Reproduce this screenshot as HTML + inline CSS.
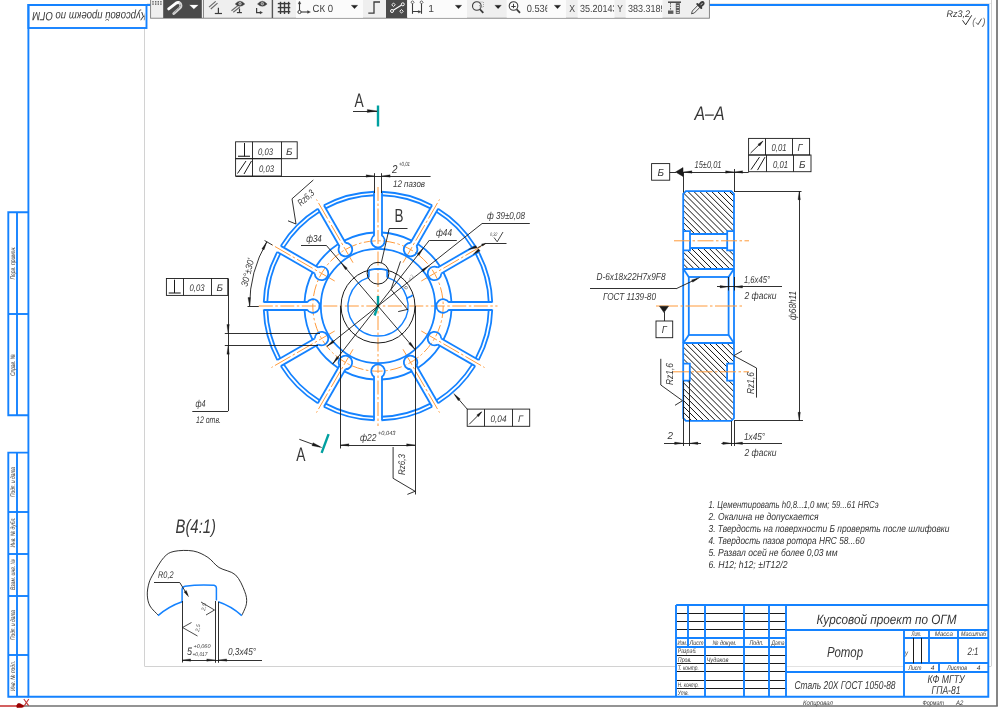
<!DOCTYPE html>
<html><head><meta charset="utf-8"><title>Ротор</title>
<style>
html,body{margin:0;padding:0;background:#fff;overflow:hidden}
body{width:1000px;height:708px;position:relative;font-family:"Liberation Sans",sans-serif}
svg{position:absolute;left:0;top:0;display:block;will-change:transform}
svg text{font-family:"Liberation Sans",sans-serif;text-rendering:geometricPrecision}
</style></head><body>
<svg width="1000" height="708" viewBox="0 0 1000 708">
<line x1="147.00" y1="3.50" x2="991.30" y2="3.50" stroke="#e6e6e6" stroke-width="1" />
<line x1="786.40" y1="666.50" x2="904.00" y2="666.50" stroke="#e2e2e2" stroke-width="1" />
<line x1="144.50" y1="28.50" x2="144.50" y2="666.40" stroke="#d2d2d2" stroke-width="1" />
<line x1="144.60" y1="666.50" x2="676.00" y2="666.50" stroke="#d2d2d2" stroke-width="1" />
<line x1="991.50" y1="0.00" x2="991.50" y2="666.00" stroke="#d2d2d2" stroke-width="1" />
<line x1="989.00" y1="666.50" x2="991.30" y2="666.50" stroke="#d2d2d2" stroke-width="1" />
<line x1="997.00" y1="0.00" x2="997.00" y2="706.00" stroke="#707070" stroke-width="1.7" />
<line x1="24.00" y1="706.00" x2="997.80" y2="706.00" stroke="#707070" stroke-width="1.7" />
<path d="M28.40,4.95 L988.30,4.95 L988.30,696.75 L28.40,696.75 Z" stroke="#1482ff" stroke-width="1.9" fill="none" />
<rect x="28.40" y="4.95" width="118.10" height="23.05" stroke="#1482ff" stroke-width="1.9" fill="none"/>
<clipPath id="tc"><rect x="29" y="5" width="115.6" height="23"/></clipPath><g clip-path="url(#tc)">
<text x="146.30" y="12.20" font-size="12" text-anchor="start" font-style="italic" fill="#383838" transform="rotate(180 146.30 12.20)" textLength="114.0" lengthAdjust="spacingAndGlyphs" >Курсовой проект по ОГМ</text>
</g>
<path d="M28.50,212.20 L8.30,212.20 L8.30,415.20 L28.50,415.20" stroke="#1482ff" stroke-width="1.9" fill="none" />
<line x1="17.00" y1="212.20" x2="17.00" y2="415.20" stroke="#1482ff" stroke-width="1.9" />
<line x1="8.30" y1="314.00" x2="28.50" y2="314.00" stroke="#1482ff" stroke-width="1.9" />
<path d="M28.50,452.60 L8.30,452.60 L8.30,696.80 L28.50,696.80" stroke="#1482ff" stroke-width="1.9" fill="none" />
<line x1="17.00" y1="452.60" x2="17.00" y2="696.80" stroke="#1482ff" stroke-width="1.9" />
<line x1="8.30" y1="512.00" x2="28.50" y2="512.00" stroke="#1482ff" stroke-width="1.9" />
<line x1="8.30" y1="554.00" x2="28.50" y2="554.00" stroke="#1482ff" stroke-width="1.9" />
<line x1="8.30" y1="596.00" x2="28.50" y2="596.00" stroke="#1482ff" stroke-width="1.9" />
<line x1="8.30" y1="655.00" x2="28.50" y2="655.00" stroke="#1482ff" stroke-width="1.9" />
<text x="15.00" y="263.00" font-size="6.6" text-anchor="middle" font-style="italic" fill="#383838" transform="rotate(-90 15.00 263.00)" textLength="33.0" lengthAdjust="spacingAndGlyphs" >Перв. примен.</text>
<text x="15.00" y="365.00" font-size="6.6" text-anchor="middle" font-style="italic" fill="#383838" transform="rotate(-90 15.00 365.00)" textLength="22.0" lengthAdjust="spacingAndGlyphs" >Справ. №</text>
<text x="15.00" y="482.00" font-size="6.6" text-anchor="middle" font-style="italic" fill="#383838" transform="rotate(-90 15.00 482.00)" textLength="30.0" lengthAdjust="spacingAndGlyphs" >Подп. и дата</text>
<text x="15.00" y="532.50" font-size="6.6" text-anchor="middle" font-style="italic" fill="#383838" transform="rotate(-90 15.00 532.50)" textLength="30.0" lengthAdjust="spacingAndGlyphs" >Инв. № дубл.</text>
<text x="15.00" y="574.50" font-size="6.6" text-anchor="middle" font-style="italic" fill="#383838" transform="rotate(-90 15.00 574.50)" textLength="31.0" lengthAdjust="spacingAndGlyphs" >Взам. инв. №</text>
<text x="15.00" y="625.00" font-size="6.6" text-anchor="middle" font-style="italic" fill="#383838" transform="rotate(-90 15.00 625.00)" textLength="30.0" lengthAdjust="spacingAndGlyphs" >Подп. и дата</text>
<text x="15.00" y="676.00" font-size="6.6" text-anchor="middle" font-style="italic" fill="#383838" transform="rotate(-90 15.00 676.00)" textLength="30.0" lengthAdjust="spacingAndGlyphs" >Инв. № подл.</text>
<line x1="0.00" y1="706.00" x2="17.00" y2="706.00" stroke="#c44" stroke-width="1.7" />
<path d="M16.5,705.8 Q17.5,702.6 20,703.6 Q22.5,705.2 24,705.6 L24,706.6 L22,707.5 L17,707.8 Z" stroke="#900" stroke-width="0.4" fill="#9a0000" />
<line x1="23.80" y1="699.00" x2="28.60" y2="705.60" stroke="#c03030" stroke-width="1.1" />
<line x1="28.80" y1="699.00" x2="24.40" y2="705.60" stroke="#c03030" stroke-width="1.1" />
<line x1="676.40" y1="613.50" x2="786.40" y2="613.50" stroke="#1a1a1a" stroke-width="1.0" />
<line x1="676.40" y1="621.50" x2="786.40" y2="621.50" stroke="#1a1a1a" stroke-width="1.0" />
<line x1="676.40" y1="629.50" x2="786.40" y2="629.50" stroke="#1a1a1a" stroke-width="1.0" />
<line x1="676.40" y1="655.50" x2="786.40" y2="655.50" stroke="#1a1a1a" stroke-width="1.0" />
<line x1="676.40" y1="663.50" x2="786.40" y2="663.50" stroke="#1a1a1a" stroke-width="1.0" />
<line x1="676.40" y1="671.50" x2="786.40" y2="671.50" stroke="#1a1a1a" stroke-width="1.0" />
<line x1="676.40" y1="680.50" x2="786.40" y2="680.50" stroke="#1a1a1a" stroke-width="1.0" />
<line x1="676.40" y1="688.50" x2="786.40" y2="688.50" stroke="#1a1a1a" stroke-width="1.0" />
<line x1="676.40" y1="605.00" x2="786.40" y2="605.00" stroke="#1482ff" stroke-width="1.9" />
<line x1="676.40" y1="638.00" x2="786.40" y2="638.00" stroke="#1482ff" stroke-width="1.9" />
<line x1="676.40" y1="647.00" x2="786.40" y2="647.00" stroke="#1482ff" stroke-width="1.9" />
<line x1="676.40" y1="605.00" x2="988.30" y2="605.00" stroke="#1482ff" stroke-width="1.9" />
<line x1="676.00" y1="604.90" x2="676.00" y2="696.75" stroke="#1482ff" stroke-width="1.9" />
<line x1="688.00" y1="604.90" x2="688.00" y2="646.65" stroke="#1482ff" stroke-width="1.9" />
<line x1="705.00" y1="604.90" x2="705.00" y2="696.75" stroke="#1482ff" stroke-width="1.9" />
<line x1="744.00" y1="604.90" x2="744.00" y2="696.75" stroke="#1482ff" stroke-width="1.9" />
<line x1="769.00" y1="604.90" x2="769.00" y2="696.75" stroke="#1482ff" stroke-width="1.9" />
<line x1="786.00" y1="604.90" x2="786.00" y2="696.75" stroke="#1482ff" stroke-width="1.9" />
<line x1="786.40" y1="630.00" x2="988.30" y2="630.00" stroke="#1482ff" stroke-width="1.9" />
<line x1="786.40" y1="672.00" x2="988.30" y2="672.00" stroke="#1482ff" stroke-width="1.9" />
<line x1="904.00" y1="630.00" x2="904.00" y2="696.80" stroke="#1482ff" stroke-width="1.9" />
<line x1="904.30" y1="638.00" x2="988.30" y2="638.00" stroke="#1482ff" stroke-width="1.9" />
<line x1="904.30" y1="663.00" x2="988.30" y2="663.00" stroke="#1482ff" stroke-width="1.9" />
<line x1="929.00" y1="630.00" x2="929.00" y2="663.40" stroke="#1482ff" stroke-width="1.9" />
<line x1="958.00" y1="630.00" x2="958.00" y2="663.40" stroke="#1482ff" stroke-width="1.9" />
<line x1="939.00" y1="663.40" x2="939.00" y2="672.20" stroke="#1482ff" stroke-width="1.9" />
<line x1="913.50" y1="637.90" x2="913.50" y2="663.40" stroke="#1a1a1a" stroke-width="1.0" />
<line x1="921.50" y1="637.90" x2="921.50" y2="663.40" stroke="#1a1a1a" stroke-width="1.0" />
<text x="886.50" y="623.50" font-size="13.5" text-anchor="middle" font-style="italic" fill="#383838" textLength="140.0" lengthAdjust="spacingAndGlyphs" >Курсовой проект по ОГМ</text>
<text x="845.00" y="657.00" font-size="14.5" text-anchor="middle" font-style="italic" fill="#383838" textLength="36.0" lengthAdjust="spacingAndGlyphs" >Ротор</text>
<text x="845.00" y="689.00" font-size="11.4" text-anchor="middle" font-style="italic" fill="#383838" textLength="101.0" lengthAdjust="spacingAndGlyphs" >Сталь 20Х ГОСТ 1050-88</text>
<text x="946.00" y="682.50" font-size="11.4" text-anchor="middle" font-style="italic" fill="#383838" textLength="37.0" lengthAdjust="spacingAndGlyphs" >КФ МГТУ</text>
<text x="946.00" y="694.00" font-size="11.4" text-anchor="middle" font-style="italic" fill="#383838" textLength="29.0" lengthAdjust="spacingAndGlyphs" >ГПА-81</text>
<text x="916.50" y="636.30" font-size="6.6" text-anchor="middle" font-style="italic" fill="#383838" textLength="10.0" lengthAdjust="spacingAndGlyphs" >Лит.</text>
<text x="943.80" y="636.30" font-size="6.6" text-anchor="middle" font-style="italic" fill="#383838" textLength="18.0" lengthAdjust="spacingAndGlyphs" >Масса</text>
<text x="973.50" y="636.30" font-size="6.6" text-anchor="middle" font-style="italic" fill="#383838" textLength="25.0" lengthAdjust="spacingAndGlyphs" >Масштаб</text>
<text x="973.00" y="655.00" font-size="10.8" text-anchor="middle" font-style="italic" fill="#383838" textLength="11.0" lengthAdjust="spacingAndGlyphs" >2:1</text>
<text x="905.00" y="655.00" font-size="6.6" text-anchor="start" font-style="italic" fill="#383838" textLength="3.0" lengthAdjust="spacingAndGlyphs" >у</text>
<text x="915.00" y="670.10" font-size="6.6" text-anchor="middle" font-style="italic" fill="#383838" textLength="13.0" lengthAdjust="spacingAndGlyphs" >Лист</text>
<text x="932.50" y="670.10" font-size="6.6" text-anchor="middle" font-style="italic" fill="#383838" >4</text>
<text x="957.00" y="670.10" font-size="6.6" text-anchor="middle" font-style="italic" fill="#383838" textLength="20.0" lengthAdjust="spacingAndGlyphs" >Листов</text>
<text x="978.50" y="670.10" font-size="6.6" text-anchor="middle" font-style="italic" fill="#383838" >4</text>
<text x="677.50" y="645.00" font-size="6.6" text-anchor="start" font-style="italic" fill="#383838" textLength="9.5" lengthAdjust="spacingAndGlyphs" >Изм.</text>
<text x="689.50" y="645.00" font-size="6.6" text-anchor="start" font-style="italic" fill="#383838" textLength="14.0" lengthAdjust="spacingAndGlyphs" >Лист</text>
<text x="724.50" y="645.00" font-size="6.6" text-anchor="middle" font-style="italic" fill="#383838" textLength="24.0" lengthAdjust="spacingAndGlyphs" >№ докум.</text>
<text x="756.50" y="645.00" font-size="6.6" text-anchor="middle" font-style="italic" fill="#383838" textLength="14.0" lengthAdjust="spacingAndGlyphs" >Подп.</text>
<text x="778.00" y="645.00" font-size="6.6" text-anchor="middle" font-style="italic" fill="#383838" textLength="13.0" lengthAdjust="spacingAndGlyphs" >Дата</text>
<text x="677.80" y="653.30" font-size="6.6" text-anchor="start" font-style="italic" fill="#383838" textLength="19.0" lengthAdjust="spacingAndGlyphs" >Разраб.</text>
<text x="677.80" y="661.70" font-size="6.6" text-anchor="start" font-style="italic" fill="#383838" textLength="14.0" lengthAdjust="spacingAndGlyphs" >Пров.</text>
<text x="706.50" y="661.70" font-size="6.6" text-anchor="start" font-style="italic" fill="#383838" textLength="22.0" lengthAdjust="spacingAndGlyphs" >Чудаков</text>
<text x="677.80" y="670.00" font-size="6.6" text-anchor="start" font-style="italic" fill="#383838" textLength="21.0" lengthAdjust="spacingAndGlyphs" >Т. контр.</text>
<text x="677.80" y="686.70" font-size="6.6" text-anchor="start" font-style="italic" fill="#383838" textLength="21.0" lengthAdjust="spacingAndGlyphs" >Н. контр.</text>
<text x="677.80" y="695.00" font-size="6.6" text-anchor="start" font-style="italic" fill="#383838" textLength="11.0" lengthAdjust="spacingAndGlyphs" >Утв.</text>
<text x="803.00" y="704.60" font-size="6.6" text-anchor="start" font-style="italic" fill="#383838" textLength="30.0" lengthAdjust="spacingAndGlyphs" >Копировал</text>
<text x="922.50" y="704.60" font-size="6.6" text-anchor="start" font-style="italic" fill="#383838" textLength="21.5" lengthAdjust="spacingAndGlyphs" >Формат</text>
<text x="956.00" y="704.60" font-size="6.6" text-anchor="start" font-style="italic" fill="#383838" textLength="7.3" lengthAdjust="spacingAndGlyphs" >А2</text>
<text x="708.50" y="508.20" font-size="10.2" text-anchor="start" font-style="italic" fill="#333" textLength="170.0" lengthAdjust="spacingAndGlyphs" >1. Цементировать h0,8...1,0 мм; 59...61 HRCэ</text>
<text x="708.50" y="520.25" font-size="10.2" text-anchor="start" font-style="italic" fill="#333" textLength="110.0" lengthAdjust="spacingAndGlyphs" >2. Окалина не допускается</text>
<text x="708.50" y="532.30" font-size="10.2" text-anchor="start" font-style="italic" fill="#333" textLength="241.0" lengthAdjust="spacingAndGlyphs" >3. Твердость на поверхности Б проверять после шлифовки</text>
<text x="708.50" y="544.35" font-size="10.2" text-anchor="start" font-style="italic" fill="#333" textLength="156.0" lengthAdjust="spacingAndGlyphs" >4. Твердость пазов ротора HRC 58...60</text>
<text x="708.50" y="556.40" font-size="10.2" text-anchor="start" font-style="italic" fill="#333" textLength="129.0" lengthAdjust="spacingAndGlyphs" >5. Развал осей не более 0,03 мм</text>
<text x="708.50" y="568.45" font-size="10.2" text-anchor="start" font-style="italic" fill="#333" textLength="79.0" lengthAdjust="spacingAndGlyphs" >6. H12; h12; ±IT12/2</text>
<text x="946.50" y="17.20" font-size="9.6" text-anchor="start" font-style="italic" fill="#383838" textLength="23.5" lengthAdjust="spacingAndGlyphs" >Rz3,2</text>
<path d="M962.50,20.30 L965.70,24.80 L971.70,15.30" stroke="#1a1a1a" stroke-width="0.9" fill="none" />
<text x="972.20" y="24.50" font-size="10.2" text-anchor="start" font-style="italic" fill="#666" textLength="3.0" lengthAdjust="spacingAndGlyphs" >(</text>
<path d="M976.10,22.50 L978.00,24.60 L981.60,18.60" stroke="#1a1a1a" stroke-width="0.8" fill="none" />
<text x="982.50" y="24.50" font-size="10.2" text-anchor="start" font-style="italic" fill="#666" textLength="3.0" lengthAdjust="spacingAndGlyphs" >)</text>
<line x1="258.80" y1="306.00" x2="497.50" y2="306.00" stroke="#ff9a3a" stroke-width="1.0" stroke-dasharray="14 2.5 2.5 2.5"/>
<line x1="378.00" y1="187.00" x2="378.00" y2="426.00" stroke="#ff9a3a" stroke-width="1.0" stroke-dasharray="14 2.5 2.5 2.5"/>
<circle cx="378.00" cy="306.00" r="65.20" stroke="#ff9a3a" stroke-width="1.0" fill="none" stroke-dasharray="12 2.5 2.5 2.5"/>
<line x1="421.30" y1="281.00" x2="484.52" y2="244.50" stroke="#ff9a3a" stroke-width="1.0" stroke-dasharray="18 2.5 2.5 2.5"/>
<line x1="403.00" y1="262.70" x2="439.50" y2="199.48" stroke="#ff9a3a" stroke-width="1.0" stroke-dasharray="18 2.5 2.5 2.5"/>
<line x1="353.00" y1="262.70" x2="316.50" y2="199.48" stroke="#ff9a3a" stroke-width="1.0" stroke-dasharray="18 2.5 2.5 2.5"/>
<line x1="334.70" y1="281.00" x2="271.48" y2="244.50" stroke="#ff9a3a" stroke-width="1.0" stroke-dasharray="18 2.5 2.5 2.5"/>
<line x1="334.70" y1="331.00" x2="271.48" y2="367.50" stroke="#ff9a3a" stroke-width="1.0" stroke-dasharray="18 2.5 2.5 2.5"/>
<line x1="353.00" y1="349.30" x2="316.50" y2="412.52" stroke="#ff9a3a" stroke-width="1.0" stroke-dasharray="18 2.5 2.5 2.5"/>
<line x1="403.00" y1="349.30" x2="439.50" y2="412.52" stroke="#ff9a3a" stroke-width="1.0" stroke-dasharray="18 2.5 2.5 2.5"/>
<line x1="421.30" y1="331.00" x2="484.52" y2="367.50" stroke="#ff9a3a" stroke-width="1.0" stroke-dasharray="18 2.5 2.5 2.5"/>
<line x1="449.03" y1="310.00" x2="492.25" y2="310.00" stroke="#1482ff" stroke-width="1.8" />
<line x1="449.03" y1="302.00" x2="492.25" y2="302.00" stroke="#1482ff" stroke-width="1.8" />
<path d="M449.09,302.60 A6.80,6.80 0 1 0 449.09,309.40" stroke="#1482ff" stroke-width="1.8" fill="none" />
<path d="M492.25,302.50 A114.30,114.30 0 0 0 478.69,251.91" stroke="#1482ff" stroke-width="1.8" fill="none" />
<path d="M488.74,302.50 A110.80,110.80 0 0 0 475.66,253.66" stroke="#1482ff" stroke-width="1.8" fill="none" />
<path d="M451.52,302.50 A73.60,73.60 0 0 0 443.42,272.27" stroke="#1482ff" stroke-width="1.8" fill="none" />
<line x1="441.26" y1="273.52" x2="478.69" y2="251.91" stroke="#1482ff" stroke-width="1.8" />
<line x1="437.76" y1="267.45" x2="475.19" y2="245.85" stroke="#1482ff" stroke-width="1.8" />
<path d="M437.86,267.51 A6.80,6.80 0 1 0 441.26,273.40" stroke="#1482ff" stroke-width="1.8" fill="none" />
<path d="M475.19,245.85 A114.30,114.30 0 0 0 438.15,208.81" stroke="#1482ff" stroke-width="1.8" fill="none" />
<path d="M472.16,247.60 A110.80,110.80 0 0 0 436.40,211.84" stroke="#1482ff" stroke-width="1.8" fill="none" />
<path d="M439.92,266.21 A73.60,73.60 0 0 0 417.79,244.08" stroke="#1482ff" stroke-width="1.8" fill="none" />
<line x1="416.55" y1="246.24" x2="438.15" y2="208.81" stroke="#1482ff" stroke-width="1.8" />
<line x1="410.48" y1="242.74" x2="432.09" y2="205.31" stroke="#1482ff" stroke-width="1.8" />
<path d="M410.60,242.74 A6.80,6.80 0 1 0 416.49,246.14" stroke="#1482ff" stroke-width="1.8" fill="none" />
<path d="M432.09,205.31 A114.30,114.30 0 0 0 381.50,191.75" stroke="#1482ff" stroke-width="1.8" fill="none" />
<path d="M430.34,208.34 A110.80,110.80 0 0 0 381.50,195.26" stroke="#1482ff" stroke-width="1.8" fill="none" />
<path d="M411.73,240.58 A73.60,73.60 0 0 0 381.50,232.48" stroke="#1482ff" stroke-width="1.8" fill="none" />
<line x1="382.00" y1="234.97" x2="382.00" y2="191.75" stroke="#1482ff" stroke-width="1.8" />
<line x1="374.00" y1="234.97" x2="374.00" y2="191.75" stroke="#1482ff" stroke-width="1.8" />
<path d="M374.60,234.91 A6.80,6.80 0 1 0 381.40,234.91" stroke="#1482ff" stroke-width="1.8" fill="none" />
<path d="M374.50,191.75 A114.30,114.30 0 0 0 323.91,205.31" stroke="#1482ff" stroke-width="1.8" fill="none" />
<path d="M374.50,195.26 A110.80,110.80 0 0 0 325.66,208.34" stroke="#1482ff" stroke-width="1.8" fill="none" />
<path d="M374.50,232.48 A73.60,73.60 0 0 0 344.27,240.58" stroke="#1482ff" stroke-width="1.8" fill="none" />
<line x1="345.52" y1="242.74" x2="323.91" y2="205.31" stroke="#1482ff" stroke-width="1.8" />
<line x1="339.45" y1="246.24" x2="317.85" y2="208.81" stroke="#1482ff" stroke-width="1.8" />
<path d="M339.51,246.14 A6.80,6.80 0 1 0 345.40,242.74" stroke="#1482ff" stroke-width="1.8" fill="none" />
<path d="M317.85,208.81 A114.30,114.30 0 0 0 280.81,245.85" stroke="#1482ff" stroke-width="1.8" fill="none" />
<path d="M319.60,211.84 A110.80,110.80 0 0 0 283.84,247.60" stroke="#1482ff" stroke-width="1.8" fill="none" />
<path d="M338.21,244.08 A73.60,73.60 0 0 0 316.08,266.21" stroke="#1482ff" stroke-width="1.8" fill="none" />
<line x1="318.24" y1="267.45" x2="280.81" y2="245.85" stroke="#1482ff" stroke-width="1.8" />
<line x1="314.74" y1="273.52" x2="277.31" y2="251.91" stroke="#1482ff" stroke-width="1.8" />
<path d="M314.74,273.40 A6.80,6.80 0 1 0 318.14,267.51" stroke="#1482ff" stroke-width="1.8" fill="none" />
<path d="M277.31,251.91 A114.30,114.30 0 0 0 263.75,302.50" stroke="#1482ff" stroke-width="1.8" fill="none" />
<path d="M280.34,253.66 A110.80,110.80 0 0 0 267.26,302.50" stroke="#1482ff" stroke-width="1.8" fill="none" />
<path d="M312.58,272.27 A73.60,73.60 0 0 0 304.48,302.50" stroke="#1482ff" stroke-width="1.8" fill="none" />
<line x1="306.97" y1="302.00" x2="263.75" y2="302.00" stroke="#1482ff" stroke-width="1.8" />
<line x1="306.97" y1="310.00" x2="263.75" y2="310.00" stroke="#1482ff" stroke-width="1.8" />
<path d="M306.91,309.40 A6.80,6.80 0 1 0 306.91,302.60" stroke="#1482ff" stroke-width="1.8" fill="none" />
<path d="M263.75,309.50 A114.30,114.30 0 0 0 277.31,360.09" stroke="#1482ff" stroke-width="1.8" fill="none" />
<path d="M267.26,309.50 A110.80,110.80 0 0 0 280.34,358.34" stroke="#1482ff" stroke-width="1.8" fill="none" />
<path d="M304.48,309.50 A73.60,73.60 0 0 0 312.58,339.73" stroke="#1482ff" stroke-width="1.8" fill="none" />
<line x1="314.74" y1="338.48" x2="277.31" y2="360.09" stroke="#1482ff" stroke-width="1.8" />
<line x1="318.24" y1="344.55" x2="280.81" y2="366.15" stroke="#1482ff" stroke-width="1.8" />
<path d="M318.14,344.49 A6.80,6.80 0 1 0 314.74,338.60" stroke="#1482ff" stroke-width="1.8" fill="none" />
<path d="M280.81,366.15 A114.30,114.30 0 0 0 317.85,403.19" stroke="#1482ff" stroke-width="1.8" fill="none" />
<path d="M283.84,364.40 A110.80,110.80 0 0 0 319.60,400.16" stroke="#1482ff" stroke-width="1.8" fill="none" />
<path d="M316.08,345.79 A73.60,73.60 0 0 0 338.21,367.92" stroke="#1482ff" stroke-width="1.8" fill="none" />
<line x1="339.45" y1="365.76" x2="317.85" y2="403.19" stroke="#1482ff" stroke-width="1.8" />
<line x1="345.52" y1="369.26" x2="323.91" y2="406.69" stroke="#1482ff" stroke-width="1.8" />
<path d="M345.40,369.26 A6.80,6.80 0 1 0 339.51,365.86" stroke="#1482ff" stroke-width="1.8" fill="none" />
<path d="M323.91,406.69 A114.30,114.30 0 0 0 374.50,420.25" stroke="#1482ff" stroke-width="1.8" fill="none" />
<path d="M325.66,403.66 A110.80,110.80 0 0 0 374.50,416.74" stroke="#1482ff" stroke-width="1.8" fill="none" />
<path d="M344.27,371.42 A73.60,73.60 0 0 0 374.50,379.52" stroke="#1482ff" stroke-width="1.8" fill="none" />
<line x1="374.00" y1="377.03" x2="374.00" y2="420.25" stroke="#1482ff" stroke-width="1.8" />
<line x1="382.00" y1="377.03" x2="382.00" y2="420.25" stroke="#1482ff" stroke-width="1.8" />
<path d="M381.40,377.09 A6.80,6.80 0 1 0 374.60,377.09" stroke="#1482ff" stroke-width="1.8" fill="none" />
<path d="M381.50,420.25 A114.30,114.30 0 0 0 432.09,406.69" stroke="#1482ff" stroke-width="1.8" fill="none" />
<path d="M381.50,416.74 A110.80,110.80 0 0 0 430.34,403.66" stroke="#1482ff" stroke-width="1.8" fill="none" />
<path d="M381.50,379.52 A73.60,73.60 0 0 0 411.73,371.42" stroke="#1482ff" stroke-width="1.8" fill="none" />
<line x1="410.48" y1="369.26" x2="432.09" y2="406.69" stroke="#1482ff" stroke-width="1.8" />
<line x1="416.55" y1="365.76" x2="438.15" y2="403.19" stroke="#1482ff" stroke-width="1.8" />
<path d="M416.49,365.86 A6.80,6.80 0 1 0 410.60,369.26" stroke="#1482ff" stroke-width="1.8" fill="none" />
<path d="M438.15,403.19 A114.30,114.30 0 0 0 475.19,366.15" stroke="#1482ff" stroke-width="1.8" fill="none" />
<path d="M436.40,400.16 A110.80,110.80 0 0 0 472.16,364.40" stroke="#1482ff" stroke-width="1.8" fill="none" />
<path d="M417.79,367.92 A73.60,73.60 0 0 0 439.92,345.79" stroke="#1482ff" stroke-width="1.8" fill="none" />
<line x1="437.76" y1="344.55" x2="475.19" y2="366.15" stroke="#1482ff" stroke-width="1.8" />
<line x1="441.26" y1="338.48" x2="478.69" y2="360.09" stroke="#1482ff" stroke-width="1.8" />
<path d="M441.26,338.60 A6.80,6.80 0 1 0 437.86,344.49" stroke="#1482ff" stroke-width="1.8" fill="none" />
<path d="M478.69,360.09 A114.30,114.30 0 0 0 492.25,309.50" stroke="#1482ff" stroke-width="1.8" fill="none" />
<path d="M475.66,358.34 A110.80,110.80 0 0 0 488.74,309.50" stroke="#1482ff" stroke-width="1.8" fill="none" />
<path d="M443.42,339.73 A73.60,73.60 0 0 0 451.52,309.50" stroke="#1482ff" stroke-width="1.8" fill="none" />
<circle cx="378.00" cy="306.00" r="57.20" stroke="#1482ff" stroke-width="1.8" fill="none" />
<circle cx="378.00" cy="306.00" r="37.00" stroke="#1a1a1a" stroke-width="1.0" fill="none" />
<path d="M368.80,277.45 A30.00,30.00 0 1 0 387.20,277.45" stroke="#1482ff" stroke-width="1.4" fill="none" />
<path d="M368.80,277.45 L368.80,271.66" stroke="#1482ff" stroke-width="1.8" fill="none" />
<path d="M387.20,277.45 L387.20,271.66" stroke="#1482ff" stroke-width="1.8" fill="none" />
<path d="M368.80,271.66 Q368.80,269.86 370.80,269.56 A37.0,37.0 0 0 1 385.20,269.56 Q387.20,269.86 387.20,271.66" stroke="#1482ff" stroke-width="1.8" fill="none" />
<path d="M406.68,299.24 Q407.28,297.44 409.18,297.04 Q411.58,296.64 412.58,295.04" stroke="#1482ff" stroke-width="1.8" fill="none" />
<circle cx="378.00" cy="273.20" r="10.90" stroke="#1a1a1a" stroke-width="1.0" fill="none" />
<line x1="378.00" y1="105.50" x2="378.00" y2="126.50" stroke="#00a0a0" stroke-width="2.4" />
<path d="M378.00,296.00 L378.00,305.50 L374.60,315.50" stroke="#00a0a0" stroke-width="2.4" fill="none" />
<line x1="328.60" y1="434.20" x2="321.60" y2="452.80" stroke="#00a0a0" stroke-width="2.4" />
<clipPath id="hc"><path d="M683.20,193.90 L685.90,191.20 L731.30,191.20 L734.00,193.90 L734.00,231.10 L727.20,231.10 L727.20,233.80 L690.00,233.80 L690.00,231.10 L683.20,231.10 Z M683.20,250.30 L690.00,250.30 L690.00,247.60 L727.20,247.60 L727.20,250.30 L734.00,250.30 L734.00,268.80 L683.20,268.80 Z M683.20,343.20 L734.00,343.20 L734.00,418.10 L731.30,420.80 L685.90,420.80 L683.20,418.10 Z"/></clipPath>
<path d="M383.20,189.20 l240,240 M389.13,189.20 l240,240 M395.06,189.20 l240,240 M400.99,189.20 l240,240 M406.92,189.20 l240,240 M412.85,189.20 l240,240 M418.78,189.20 l240,240 M424.71,189.20 l240,240 M430.64,189.20 l240,240 M436.57,189.20 l240,240 M442.50,189.20 l240,240 M448.43,189.20 l240,240 M454.36,189.20 l240,240 M460.29,189.20 l240,240 M466.22,189.20 l240,240 M472.15,189.20 l240,240 M478.08,189.20 l240,240 M484.01,189.20 l240,240 M489.94,189.20 l240,240 M495.87,189.20 l240,240 M501.80,189.20 l240,240 M507.73,189.20 l240,240 M513.66,189.20 l240,240 M519.59,189.20 l240,240 M525.52,189.20 l240,240 M531.45,189.20 l240,240 M537.38,189.20 l240,240 M543.31,189.20 l240,240 M549.24,189.20 l240,240 M555.17,189.20 l240,240 M561.10,189.20 l240,240 M567.03,189.20 l240,240 M572.96,189.20 l240,240 M578.89,189.20 l240,240 M584.82,189.20 l240,240 M590.75,189.20 l240,240 M596.68,189.20 l240,240 M602.61,189.20 l240,240 M608.54,189.20 l240,240 M614.47,189.20 l240,240 M620.40,189.20 l240,240 M626.33,189.20 l240,240 M632.26,189.20 l240,240 M638.19,189.20 l240,240 M644.12,189.20 l240,240 M650.05,189.20 l240,240 M655.98,189.20 l240,240 M661.91,189.20 l240,240 M667.84,189.20 l240,240 M673.77,189.20 l240,240 M679.70,189.20 l240,240 M685.63,189.20 l240,240 M691.56,189.20 l240,240 M697.49,189.20 l240,240 M703.42,189.20 l240,240 M709.35,189.20 l240,240 M715.28,189.20 l240,240 M721.21,189.20 l240,240 M727.14,189.20 l240,240 M733.07,189.20 l240,240 M739.00,189.20 l240,240 M744.93,189.20 l240,240 M750.86,189.20 l240,240 M756.79,189.20 l240,240 M762.72,189.20 l240,240 M768.65,189.20 l240,240 M774.58,189.20 l240,240 M780.51,189.20 l240,240 M786.44,189.20 l240,240 M792.37,189.20 l240,240 M798.30,189.20 l240,240" stroke="#111" stroke-width="1.0" fill="none" clip-path="url(#hc)"/>
<rect x="683.20" y="363.60" width="6.60" height="17.00" stroke="none" stroke-width="0" fill="#fff"/>
<rect x="727.10" y="363.60" width="6.90" height="17.00" stroke="none" stroke-width="0" fill="#fff"/>
<path d="M683.20,363.60 L689.80,363.60 L689.80,380.60 L683.20,380.60" stroke="#1482ff" stroke-width="1.8" fill="none" />
<path d="M734.00,363.60 L727.10,363.60 L727.10,380.60 L734.00,380.60" stroke="#1482ff" stroke-width="1.8" fill="none" />
<path d="M683.20,193.90 L685.90,191.20 L731.30,191.20 L734.00,193.90 L734.00,418.10 L731.30,420.80 L685.90,420.80 L683.20,418.10 Z" stroke="#1482ff" stroke-width="1.8" fill="none" />
<line x1="690.00" y1="234.00" x2="727.20" y2="234.00" stroke="#1482ff" stroke-width="1.8" />
<line x1="690.00" y1="248.00" x2="727.20" y2="248.00" stroke="#1482ff" stroke-width="1.8" />
<path d="M683.20,231.10 L690.00,231.10 L690.00,250.30 L683.20,250.30" stroke="#1482ff" stroke-width="1.8" fill="none" />
<path d="M734.00,231.10 L727.20,231.10 L727.20,250.30 L734.00,250.30" stroke="#1482ff" stroke-width="1.8" fill="none" />
<line x1="683.20" y1="269.00" x2="734.00" y2="269.00" stroke="#1482ff" stroke-width="1.8" />
<line x1="683.20" y1="343.00" x2="734.00" y2="343.00" stroke="#1482ff" stroke-width="1.8" />
<rect x="688.80" y="277.00" width="39.80" height="58.00" stroke="#1482ff" stroke-width="1.8" fill="none"/>
<line x1="683.20" y1="268.80" x2="688.80" y2="277.00" stroke="#1482ff" stroke-width="1.8" />
<line x1="734.00" y1="268.80" x2="728.60" y2="277.00" stroke="#1482ff" stroke-width="1.8" />
<line x1="683.20" y1="343.20" x2="688.80" y2="335.00" stroke="#1482ff" stroke-width="1.8" />
<line x1="734.00" y1="343.20" x2="728.60" y2="335.00" stroke="#1482ff" stroke-width="1.8" />
<line x1="656.00" y1="306.00" x2="742.00" y2="306.00" stroke="#ff9a3a" stroke-width="1.0" stroke-dasharray="22 2.5 2.5 2.5"/>
<line x1="674.00" y1="240.80" x2="749.00" y2="240.80" stroke="#ff9a3a" stroke-width="1.0" stroke-dasharray="16 2.5 2.5 2.5"/>
<line x1="673.00" y1="371.80" x2="749.00" y2="371.80" stroke="#ff9a3a" stroke-width="1.0" stroke-dasharray="16 2.5 2.5 2.5"/>
<text x="354.60" y="107.20" font-size="19.5" text-anchor="start" fill="#383838" textLength="9.2" lengthAdjust="spacingAndGlyphs" >А</text>
<line x1="353.00" y1="111.50" x2="377.00" y2="111.50" stroke="#1a1a1a" stroke-width="0.9" />
<path d="M377.30,111.00 L367.30,112.60 L367.30,109.40 Z" stroke="#1a1a1a" stroke-width="0.3" fill="#1a1a1a" />
<text x="296.30" y="460.60" font-size="19.5" text-anchor="start" fill="#383838" textLength="9.2" lengthAdjust="spacingAndGlyphs" >А</text>
<line x1="299.30" y1="439.30" x2="320.00" y2="446.90" stroke="#1a1a1a" stroke-width="0.9" />
<path d="M321.90,447.60 L311.96,445.65 L313.07,442.65 Z" stroke="#1a1a1a" stroke-width="0.3" fill="#1a1a1a" />
<rect x="235.60" y="141.80" width="61.60" height="16.90" stroke="#1a1a1a" stroke-width="0.9" fill="none"/>
<line x1="252.50" y1="141.80" x2="252.50" y2="158.70" stroke="#1a1a1a" stroke-width="0.9" />
<line x1="281.50" y1="141.80" x2="281.50" y2="158.70" stroke="#1a1a1a" stroke-width="0.9" />
<rect x="235.60" y="158.70" width="45.80" height="17.30" stroke="#1a1a1a" stroke-width="0.9" fill="none"/>
<line x1="252.50" y1="158.70" x2="252.50" y2="176.00" stroke="#1a1a1a" stroke-width="0.9" />
<line x1="238.00" y1="156.30" x2="250.00" y2="156.30" stroke="#444" stroke-width="1.3" />
<line x1="244.50" y1="156.30" x2="244.50" y2="143.00" stroke="#1a1a1a" stroke-width="1.0" />
<line x1="237.50" y1="173.50" x2="246.00" y2="161.00" stroke="#1a1a1a" stroke-width="1.0" />
<line x1="244.00" y1="174.00" x2="251.50" y2="161.00" stroke="#1a1a1a" stroke-width="1.0" />
<text x="258.00" y="154.50" font-size="9.6" text-anchor="start" font-style="italic" fill="#383838" textLength="15.0" lengthAdjust="spacingAndGlyphs" >0,03</text>
<text x="286.00" y="154.50" font-size="9.6" text-anchor="start" font-style="italic" fill="#383838" textLength="6.5" lengthAdjust="spacingAndGlyphs" >Б</text>
<text x="259.00" y="171.50" font-size="9.6" text-anchor="start" font-style="italic" fill="#383838" textLength="15.0" lengthAdjust="spacingAndGlyphs" >0,03</text>
<line x1="235.60" y1="176.50" x2="430.60" y2="176.50" stroke="#1a1a1a" stroke-width="0.9" />
<line x1="374.50" y1="173.20" x2="374.50" y2="193.00" stroke="#1a1a1a" stroke-width="0.9" />
<line x1="381.50" y1="173.20" x2="381.50" y2="193.00" stroke="#1a1a1a" stroke-width="0.9" />
<path d="M374.70,176.00 L366.20,177.20 L366.20,174.80 Z" stroke="#1a1a1a" stroke-width="0.3" fill="#1a1a1a" />
<path d="M381.60,176.00 L390.10,174.80 L390.10,177.20 Z" stroke="#1a1a1a" stroke-width="0.3" fill="#1a1a1a" />
<text x="392.00" y="172.50" font-size="11.4" text-anchor="start" font-style="italic" fill="#383838" textLength="5.5" lengthAdjust="spacingAndGlyphs" >2</text>
<text x="399.00" y="166.00" font-size="6.0" text-anchor="start" font-style="italic" fill="#383838" textLength="11.0" lengthAdjust="spacingAndGlyphs" >+0,01</text>
<text x="393.00" y="186.80" font-size="9.6" text-anchor="start" font-style="italic" fill="#383838" textLength="32.0" lengthAdjust="spacingAndGlyphs" >12 пазов</text>
<path d="M313.30,180.00 L292.00,198.80 L296.00,224.00" stroke="#1a1a1a" stroke-width="0.9" fill="none" />
<line x1="288.00" y1="220.80" x2="296.00" y2="224.00" stroke="#1a1a1a" stroke-width="0.9" />
<text x="301.00" y="206.50" font-size="9.6" text-anchor="start" font-style="italic" fill="#383838" transform="rotate(-42 301.00 206.50)" textLength="19.0" lengthAdjust="spacingAndGlyphs" >Rz6,3</text>
<path d="M266.80,241.80 A128.40,128.40 0 0 0 249.60,306.00" stroke="#1a1a1a" stroke-width="0.9" fill="none" />
<line x1="247.50" y1="306.50" x2="258.80" y2="306.50" stroke="#1a1a1a" stroke-width="0.9" />
<line x1="272.34" y1="245.00" x2="264.55" y2="240.50" stroke="#1a1a1a" stroke-width="0.9" />
<path d="M266.80,241.80 L264.01,249.92 L261.87,248.83 Z" stroke="#1a1a1a" stroke-width="0.3" fill="#1a1a1a" />
<path d="M249.60,306.00 L247.96,297.57 L250.35,297.45 Z" stroke="#1a1a1a" stroke-width="0.3" fill="#1a1a1a" />
<text x="247.30" y="287.00" font-size="9.6" text-anchor="start" font-style="italic" fill="#383838" transform="rotate(-76 247.30 287.00)" textLength="28.5" lengthAdjust="spacingAndGlyphs" >30°±30'</text>
<line x1="301.00" y1="245.50" x2="326.70" y2="245.50" stroke="#1a1a1a" stroke-width="0.9" />
<line x1="326.70" y1="245.80" x2="415.10" y2="349.54" stroke="#1a1a1a" stroke-width="0.9" />
<path d="M340.90,262.46 L347.33,268.15 L345.50,269.71 Z" stroke="#1a1a1a" stroke-width="0.3" fill="#1a1a1a" />
<path d="M415.10,349.54 L408.67,343.85 L410.50,342.29 Z" stroke="#1a1a1a" stroke-width="0.3" fill="#1a1a1a" />
<text x="306.30" y="242.00" font-size="10.2" text-anchor="start" font-style="italic" fill="#383838" textLength="15.5" lengthAdjust="spacingAndGlyphs" >ф34</text>
<text x="394.50" y="222.00" font-size="19" text-anchor="start" fill="#383838" textLength="9.0" lengthAdjust="spacingAndGlyphs" >В</text>
<line x1="389.20" y1="228.50" x2="407.50" y2="228.50" stroke="#1a1a1a" stroke-width="0.9" />
<line x1="389.20" y1="228.60" x2="381.30" y2="262.80" stroke="#1a1a1a" stroke-width="0.9" />
<line x1="429.60" y1="240.50" x2="456.80" y2="240.50" stroke="#1a1a1a" stroke-width="0.9" />
<line x1="429.60" y1="240.00" x2="332.67" y2="363.98" stroke="#1a1a1a" stroke-width="0.9" />
<path d="M423.33,248.02 L419.04,255.45 L417.15,253.97 Z" stroke="#1a1a1a" stroke-width="0.3" fill="#1a1a1a" />
<path d="M332.67,363.98 L336.96,356.55 L338.85,358.03 Z" stroke="#1a1a1a" stroke-width="0.3" fill="#1a1a1a" />
<text x="436.00" y="235.50" font-size="10.2" text-anchor="start" font-style="italic" fill="#383838" textLength="16.0" lengthAdjust="spacingAndGlyphs" >ф44</text>
<line x1="482.00" y1="223.50" x2="529.80" y2="223.50" stroke="#1a1a1a" stroke-width="0.9" />
<line x1="482.00" y1="223.60" x2="326.90" y2="346.49" stroke="#1a1a1a" stroke-width="0.9" />
<path d="M429.10,265.51 L423.19,271.73 L421.70,269.85 Z" stroke="#1a1a1a" stroke-width="0.3" fill="#1a1a1a" />
<path d="M326.90,346.49 L332.81,340.27 L334.30,342.15 Z" stroke="#1a1a1a" stroke-width="0.3" fill="#1a1a1a" />
<text x="487.00" y="218.60" font-size="10.2" text-anchor="start" font-style="italic" fill="#383838" textLength="38.0" lengthAdjust="spacingAndGlyphs" >ф 39±0,08</text>
<line x1="486.00" y1="243.50" x2="506.50" y2="243.50" stroke="#1a1a1a" stroke-width="0.9" />
<path d="M494.00,237.50 L497.20,241.80 L503.00,232.00" stroke="#1a1a1a" stroke-width="0.8" fill="none" />
<text x="490.00" y="235.80" font-size="5.04" text-anchor="start" font-style="italic" fill="#444" textLength="7.5" lengthAdjust="spacingAndGlyphs" >0,32</text>
<line x1="486.00" y1="243.30" x2="477.50" y2="247.80" stroke="#1a1a1a" stroke-width="0.9" />
<path d="M468.30,249.60 L476.00,245.60 L477.20,247.90 Z" stroke="#1a1a1a" stroke-width="0.3" fill="#1a1a1a" />
<path d="M473.00,254.60 L478.40,248.80 L480.20,251.00 Z" stroke="#1a1a1a" stroke-width="0.3" fill="#1a1a1a" />
<path d="M486.00,243.30 L481.50,244.00 L482.50,246.00 Z" stroke="#1a1a1a" stroke-width="0.3" fill="#1a1a1a" />
<line x1="400.50" y1="261.30" x2="391.00" y2="289.50" stroke="#1a1a1a" stroke-width="0.9" />
<text x="406.50" y="290.00" font-size="6.6" text-anchor="start" font-style="italic" fill="#666" transform="rotate(-62 406.50 290.00)" >6</text>
<text x="410.00" y="283.00" font-size="4.2" text-anchor="start" font-style="italic" fill="#777" transform="rotate(-62 410.00 283.00)" >+0,2</text>
<line x1="391.00" y1="289.50" x2="408.00" y2="310.00" stroke="#1a1a1a" stroke-width="0.9" />
<line x1="398.20" y1="311.60" x2="408.00" y2="309.30" stroke="#1a1a1a" stroke-width="0.9" />
<rect x="166.40" y="278.50" width="61.40" height="16.90" stroke="#1a1a1a" stroke-width="0.9" fill="none"/>
<line x1="183.50" y1="278.50" x2="183.50" y2="295.40" stroke="#1a1a1a" stroke-width="0.9" />
<line x1="211.50" y1="278.50" x2="211.50" y2="295.40" stroke="#1a1a1a" stroke-width="0.9" />
<line x1="168.70" y1="293.00" x2="180.70" y2="293.00" stroke="#444" stroke-width="1.3" />
<line x1="174.50" y1="293.00" x2="174.50" y2="279.70" stroke="#1a1a1a" stroke-width="1.0" />
<text x="189.50" y="291.20" font-size="9.6" text-anchor="start" font-style="italic" fill="#383838" textLength="15.0" lengthAdjust="spacingAndGlyphs" >0,03</text>
<text x="216.50" y="291.20" font-size="9.6" text-anchor="start" font-style="italic" fill="#383838" textLength="6.5" lengthAdjust="spacingAndGlyphs" >Б</text>
<line x1="228.50" y1="278.50" x2="228.50" y2="411.00" stroke="#1a1a1a" stroke-width="0.9" />
<line x1="224.80" y1="333.50" x2="320.00" y2="333.50" stroke="#1a1a1a" stroke-width="0.9" />
<line x1="224.80" y1="345.50" x2="318.00" y2="345.50" stroke="#1a1a1a" stroke-width="0.9" />
<path d="M228.10,333.00 L226.90,324.50 L229.30,324.50 Z" stroke="#1a1a1a" stroke-width="0.3" fill="#1a1a1a" />
<path d="M228.10,345.70 L229.30,354.20 L226.90,354.20 Z" stroke="#1a1a1a" stroke-width="0.3" fill="#1a1a1a" />
<line x1="192.30" y1="411.50" x2="228.10" y2="411.50" stroke="#1a1a1a" stroke-width="0.9" />
<text x="195.50" y="407.00" font-size="10.2" text-anchor="start" font-style="italic" fill="#383838" textLength="10.0" lengthAdjust="spacingAndGlyphs" >ф4</text>
<text x="196.00" y="423.00" font-size="9.6" text-anchor="start" font-style="italic" fill="#383838" textLength="25.0" lengthAdjust="spacingAndGlyphs" >12 отв.</text>
<line x1="340.50" y1="306.00" x2="340.50" y2="448.50" stroke="#1a1a1a" stroke-width="0.9" />
<line x1="415.50" y1="306.00" x2="415.50" y2="494.50" stroke="#1a1a1a" stroke-width="0.9" />
<line x1="340.40" y1="445.50" x2="415.10" y2="445.50" stroke="#1a1a1a" stroke-width="0.9" />
<path d="M340.40,445.00 L348.90,443.80 L348.90,446.20 Z" stroke="#1a1a1a" stroke-width="0.3" fill="#1a1a1a" />
<path d="M415.10,445.00 L406.60,446.20 L406.60,443.80 Z" stroke="#1a1a1a" stroke-width="0.3" fill="#1a1a1a" />
<text x="360.00" y="441.20" font-size="10.2" text-anchor="start" font-style="italic" fill="#383838" textLength="16.5" lengthAdjust="spacingAndGlyphs" >ф22</text>
<text x="378.00" y="435.30" font-size="6.0" text-anchor="start" font-style="italic" fill="#383838" textLength="17.5" lengthAdjust="spacingAndGlyphs" >+0,043</text>
<path d="M393.10,447.00 L393.10,478.30 L415.10,491.30" stroke="#1a1a1a" stroke-width="0.9" fill="none" />
<line x1="415.10" y1="491.30" x2="407.40" y2="494.40" stroke="#1a1a1a" stroke-width="0.9" />
<text x="404.80" y="475.00" font-size="9.6" text-anchor="start" font-style="italic" fill="#383838" transform="rotate(-90 404.80 475.00)" textLength="21.0" lengthAdjust="spacingAndGlyphs" >Rz6,3</text>
<rect x="467.20" y="409.10" width="62.50" height="17.20" stroke="#1a1a1a" stroke-width="0.9" fill="none"/>
<line x1="484.50" y1="409.10" x2="484.50" y2="426.30" stroke="#1a1a1a" stroke-width="0.9" />
<line x1="512.50" y1="409.10" x2="512.50" y2="426.30" stroke="#1a1a1a" stroke-width="0.9" />
<line x1="469.20" y1="424.30" x2="481.40" y2="412.10" stroke="#1a1a1a" stroke-width="0.9" />
<path d="M481.90,411.60 L478.58,416.76 L476.74,414.92 Z" stroke="#1a1a1a" stroke-width="0.3" fill="#1a1a1a" />
<text x="490.50" y="422.30" font-size="9.6" text-anchor="start" font-style="italic" fill="#383838" textLength="16.0" lengthAdjust="spacingAndGlyphs" >0,04</text>
<text x="518.00" y="422.30" font-size="9.6" text-anchor="start" font-style="italic" fill="#383838" textLength="5.0" lengthAdjust="spacingAndGlyphs" >Г</text>
<line x1="467.20" y1="409.10" x2="455.00" y2="395.00" stroke="#1a1a1a" stroke-width="0.9" />
<path d="M453.70,393.50 L460.26,399.06 L458.30,400.77 Z" stroke="#1a1a1a" stroke-width="0.3" fill="#1a1a1a" />
<text x="694.50" y="119.80" font-size="19.5" text-anchor="start" font-style="italic" fill="#383838" textLength="30.0" lengthAdjust="spacingAndGlyphs" >А–А</text>
<rect x="651.60" y="163.60" width="18.10" height="16.60" stroke="#1a1a1a" stroke-width="0.9" fill="none"/>
<text x="657.50" y="175.60" font-size="10.2" text-anchor="start" font-style="italic" fill="#383838" textLength="6.5" lengthAdjust="spacingAndGlyphs" >Б</text>
<line x1="669.70" y1="172.50" x2="676.00" y2="172.50" stroke="#1a1a1a" stroke-width="0.9" />
<path d="M675.60,172.00 L683.00,167.60 L683.00,176.40 Z" stroke="#1a1a1a" stroke-width="0.5" fill="#1a1a1a" />
<line x1="683.50" y1="172.00" x2="683.50" y2="192.50" stroke="#1a1a1a" stroke-width="0.9" />
<line x1="734.50" y1="169.00" x2="734.50" y2="192.00" stroke="#1a1a1a" stroke-width="0.9" />
<line x1="683.10" y1="172.50" x2="748.60" y2="172.50" stroke="#1a1a1a" stroke-width="0.9" />
<path d="M683.40,172.00 L691.90,170.80 L691.90,173.20 Z" stroke="#1a1a1a" stroke-width="0.3" fill="#1a1a1a" />
<path d="M734.10,172.00 L725.60,173.20 L725.60,170.80 Z" stroke="#1a1a1a" stroke-width="0.3" fill="#1a1a1a" />
<path d="M734.10,172.00 L742.60,170.80 L742.60,173.20 Z" stroke="#1a1a1a" stroke-width="0.3" fill="#1a1a1a" />
<text x="694.50" y="168.30" font-size="10.2" text-anchor="start" font-style="italic" fill="#383838" textLength="27.0" lengthAdjust="spacingAndGlyphs" >15±0,01</text>
<rect x="748.60" y="138.40" width="61.00" height="16.60" stroke="#1a1a1a" stroke-width="0.9" fill="none"/>
<line x1="765.50" y1="138.40" x2="765.50" y2="155.00" stroke="#1a1a1a" stroke-width="0.9" />
<line x1="792.50" y1="138.40" x2="792.50" y2="155.00" stroke="#1a1a1a" stroke-width="0.9" />
<rect x="748.60" y="155.00" width="62.40" height="16.70" stroke="#1a1a1a" stroke-width="0.9" fill="none"/>
<line x1="766.50" y1="155.00" x2="766.50" y2="171.70" stroke="#1a1a1a" stroke-width="0.9" />
<line x1="793.50" y1="155.00" x2="793.50" y2="171.70" stroke="#1a1a1a" stroke-width="0.9" />
<line x1="750.60" y1="153.00" x2="762.60" y2="141.40" stroke="#1a1a1a" stroke-width="0.9" />
<path d="M763.10,140.90 L759.78,146.06 L757.94,144.22 Z" stroke="#1a1a1a" stroke-width="0.3" fill="#1a1a1a" />
<line x1="751.00" y1="169.60" x2="759.50" y2="157.10" stroke="#1a1a1a" stroke-width="1.0" />
<line x1="757.50" y1="170.10" x2="765.00" y2="157.10" stroke="#1a1a1a" stroke-width="1.0" />
<text x="771.50" y="151.00" font-size="10.2" text-anchor="start" font-style="italic" fill="#383838" textLength="15.0" lengthAdjust="spacingAndGlyphs" >0,01</text>
<text x="797.50" y="151.00" font-size="10.2" text-anchor="start" font-style="italic" fill="#383838" textLength="5.0" lengthAdjust="spacingAndGlyphs" >Г</text>
<text x="773.00" y="167.60" font-size="10.2" text-anchor="start" font-style="italic" fill="#383838" textLength="15.0" lengthAdjust="spacingAndGlyphs" >0,01</text>
<text x="799.00" y="167.60" font-size="10.2" text-anchor="start" font-style="italic" fill="#383838" textLength="6.5" lengthAdjust="spacingAndGlyphs" >Б</text>
<line x1="734.00" y1="191.50" x2="801.50" y2="191.50" stroke="#1a1a1a" stroke-width="0.9" />
<line x1="734.00" y1="420.50" x2="803.00" y2="420.50" stroke="#1a1a1a" stroke-width="0.9" />
<line x1="799.50" y1="191.20" x2="799.50" y2="420.80" stroke="#1a1a1a" stroke-width="0.9" />
<path d="M799.20,191.20 L800.40,199.70 L798.00,199.70 Z" stroke="#1a1a1a" stroke-width="0.3" fill="#1a1a1a" />
<path d="M799.20,420.80 L798.00,412.30 L800.40,412.30 Z" stroke="#1a1a1a" stroke-width="0.3" fill="#1a1a1a" />
<text x="795.50" y="320.00" font-size="10.2" text-anchor="start" font-style="italic" fill="#383838" transform="rotate(-90 795.50 320.00)" textLength="29.0" lengthAdjust="spacingAndGlyphs" >ф68h11</text>
<line x1="590.00" y1="288.50" x2="676.00" y2="288.50" stroke="#1a1a1a" stroke-width="0.9" />
<line x1="676.00" y1="288.80" x2="697.00" y2="278.80" stroke="#1a1a1a" stroke-width="0.9" />
<path d="M699.80,277.40 L692.69,282.23 L691.57,279.89 Z" stroke="#1a1a1a" stroke-width="0.3" fill="#1a1a1a" />
<text x="596.50" y="280.30" font-size="10.2" text-anchor="start" font-style="italic" fill="#383838" textLength="69.0" lengthAdjust="spacingAndGlyphs" >D-6x18x22H7x9F8</text>
<text x="603.00" y="300.30" font-size="10.2" text-anchor="start" font-style="italic" fill="#383838" textLength="53.0" lengthAdjust="spacingAndGlyphs" >ГОСТ 1139-80</text>
<path d="M659.50,306.20 L668.50,306.20 L664.00,312.60 Z" stroke="#1a1a1a" stroke-width="0.5" fill="#1a1a1a" />
<line x1="664.50" y1="312.00" x2="664.50" y2="321.00" stroke="#1a1a1a" stroke-width="0.9" />
<rect x="656.00" y="321.00" width="16.70" height="16.70" stroke="#1a1a1a" stroke-width="0.9" fill="none"/>
<text x="661.80" y="333.00" font-size="10.2" text-anchor="start" font-style="italic" fill="#383838" textLength="5.0" lengthAdjust="spacingAndGlyphs" >Г</text>
<line x1="717.00" y1="286.50" x2="782.00" y2="286.50" stroke="#1a1a1a" stroke-width="0.9" />
<line x1="728.50" y1="277.00" x2="728.50" y2="290.50" stroke="#1a1a1a" stroke-width="0.9" />
<line x1="734.50" y1="277.00" x2="734.50" y2="290.50" stroke="#1a1a1a" stroke-width="0.9" />
<path d="M728.60,286.80 L720.10,288.00 L720.10,285.60 Z" stroke="#1a1a1a" stroke-width="0.3" fill="#1a1a1a" />
<path d="M734.00,286.80 L742.50,285.60 L742.50,288.00 Z" stroke="#1a1a1a" stroke-width="0.3" fill="#1a1a1a" />
<text x="744.00" y="283.00" font-size="10.2" text-anchor="start" font-style="italic" fill="#383838" textLength="26.0" lengthAdjust="spacingAndGlyphs" >1,6x45°</text>
<text x="744.50" y="299.00" font-size="10.2" text-anchor="start" font-style="italic" fill="#383838" textLength="32.0" lengthAdjust="spacingAndGlyphs" >2 фаски</text>
<path d="M660.80,358.80 L660.80,385.00 L682.50,400.70" stroke="#1a1a1a" stroke-width="0.9" fill="none" />
<line x1="675.00" y1="405.30" x2="682.50" y2="400.70" stroke="#1a1a1a" stroke-width="0.9" />
<text x="672.50" y="385.00" font-size="10.2" text-anchor="start" font-style="italic" fill="#383838" transform="rotate(-90 672.50 385.00)" textLength="22.0" lengthAdjust="spacingAndGlyphs" >Rz1,6</text>
<path d="M733.80,355.70 L756.50,368.00 L756.50,397.60" stroke="#1a1a1a" stroke-width="0.9" fill="none" />
<line x1="733.80" y1="355.70" x2="742.00" y2="351.00" stroke="#1a1a1a" stroke-width="0.9" />
<text x="753.80" y="394.00" font-size="10.2" text-anchor="start" font-style="italic" fill="#383838" transform="rotate(-90 753.80 394.00)" textLength="22.0" lengthAdjust="spacingAndGlyphs" >Rz1,6</text>
<line x1="683.50" y1="380.50" x2="683.50" y2="446.00" stroke="#1a1a1a" stroke-width="0.9" />
<line x1="689.50" y1="380.50" x2="689.50" y2="446.00" stroke="#1a1a1a" stroke-width="0.9" />
<line x1="664.00" y1="443.50" x2="701.00" y2="443.50" stroke="#1a1a1a" stroke-width="0.9" />
<path d="M683.10,443.30 L674.60,444.50 L674.60,442.10 Z" stroke="#1a1a1a" stroke-width="0.3" fill="#1a1a1a" />
<path d="M689.40,443.30 L697.90,442.10 L697.90,444.50 Z" stroke="#1a1a1a" stroke-width="0.3" fill="#1a1a1a" />
<text x="667.50" y="439.00" font-size="10.2" text-anchor="start" font-style="italic" fill="#383838" textLength="5.5" lengthAdjust="spacingAndGlyphs" >2</text>
<line x1="731.50" y1="421.00" x2="731.50" y2="446.00" stroke="#1a1a1a" stroke-width="0.9" />
<line x1="734.50" y1="421.00" x2="734.50" y2="446.00" stroke="#1a1a1a" stroke-width="0.9" />
<line x1="721.40" y1="443.50" x2="782.00" y2="443.50" stroke="#1a1a1a" stroke-width="0.9" />
<path d="M731.30,443.30 L722.80,444.50 L722.80,442.10 Z" stroke="#1a1a1a" stroke-width="0.3" fill="#1a1a1a" />
<path d="M734.00,443.30 L742.50,442.10 L742.50,444.50 Z" stroke="#1a1a1a" stroke-width="0.3" fill="#1a1a1a" />
<text x="744.00" y="439.50" font-size="10.2" text-anchor="start" font-style="italic" fill="#383838" textLength="21.0" lengthAdjust="spacingAndGlyphs" >1x45°</text>
<text x="744.50" y="455.50" font-size="10.2" text-anchor="start" font-style="italic" fill="#383838" textLength="32.0" lengthAdjust="spacingAndGlyphs" >2 фаски</text>
<text x="175.50" y="533.00" font-size="19.5" text-anchor="start" font-style="italic" fill="#383838" textLength="40.5" lengthAdjust="spacingAndGlyphs" >В(4:1)</text>
<path d="M158.40,615.30 C157.00,613.75 151.85,609.37 150.00,606.00 C148.15,602.63 147.47,598.93 147.30,595.10 C147.13,591.27 147.92,586.68 149.00,583.00 C150.08,579.32 151.32,577.27 153.80,573.00 C156.28,568.73 160.53,561.00 163.90,557.40 C167.27,553.80 169.12,552.47 174.00,551.40 C178.88,550.33 187.55,550.00 193.20,551.00 C198.85,552.00 203.60,554.65 207.90,557.40 C212.20,560.15 214.40,564.58 219.00,567.50 C223.60,570.42 231.22,570.92 235.50,574.90 C239.78,578.88 242.87,586.67 244.70,591.40 C246.53,596.13 246.97,599.32 246.50,603.30 C246.03,607.28 242.67,613.30 241.90,615.30" stroke="#1a1a1a" stroke-width="0.9" fill="none" />
<path d="M158,615.6 Q169,606.3 182.1,601.8 L182.1,589.3 Q182.4,586.9 185,586.3 Q199,584.2 214,585.3 Q216.3,585.8 216.4,588 L216.4,600.6" stroke="#1482ff" stroke-width="1.5" fill="none" />
<path d="M218.2,601.8 Q231,606 241.8,615.6" stroke="#1482ff" stroke-width="1.5" fill="none" />
<line x1="182.50" y1="601.00" x2="182.50" y2="662.50" stroke="#1a1a1a" stroke-width="0.9" />
<line x1="215.50" y1="601.00" x2="215.50" y2="662.80" stroke="#1a1a1a" stroke-width="0.9" />
<line x1="218.50" y1="601.80" x2="218.50" y2="662.80" stroke="#1a1a1a" stroke-width="0.9" />
<line x1="182.10" y1="660.50" x2="262.00" y2="660.50" stroke="#1a1a1a" stroke-width="0.9" />
<path d="M182.10,660.10 L190.60,658.90 L190.60,661.30 Z" stroke="#1a1a1a" stroke-width="0.3" fill="#1a1a1a" />
<path d="M215.30,660.10 L206.80,661.30 L206.80,658.90 Z" stroke="#1a1a1a" stroke-width="0.3" fill="#1a1a1a" />
<path d="M218.20,660.10 L226.70,658.90 L226.70,661.30 Z" stroke="#1a1a1a" stroke-width="0.3" fill="#1a1a1a" />
<text x="187.00" y="654.50" font-size="10.8" text-anchor="start" font-style="italic" fill="#383838" textLength="5.0" lengthAdjust="spacingAndGlyphs" >5</text>
<text x="193.50" y="648.00" font-size="5.4" text-anchor="start" font-style="italic" fill="#383838" textLength="17.0" lengthAdjust="spacingAndGlyphs" >+0,060</text>
<text x="192.50" y="655.50" font-size="5.4" text-anchor="start" font-style="italic" fill="#383838" textLength="15.0" lengthAdjust="spacingAndGlyphs" >+0,017</text>
<text x="228.00" y="655.30" font-size="10.2" text-anchor="start" font-style="italic" fill="#383838" textLength="28.0" lengthAdjust="spacingAndGlyphs" >0,3x45°</text>
<line x1="154.00" y1="582.50" x2="179.80" y2="582.50" stroke="#1a1a1a" stroke-width="0.9" />
<line x1="179.80" y1="582.60" x2="187.50" y2="595.00" stroke="#1a1a1a" stroke-width="0.9" />
<path d="M188.60,596.80 L183.97,592.03 L186.34,590.55 Z" stroke="#1a1a1a" stroke-width="0.3" fill="#1a1a1a" />
<text x="158.00" y="578.00" font-size="9.6" text-anchor="start" font-style="italic" fill="#383838" textLength="15.5" lengthAdjust="spacingAndGlyphs" >R0,2</text>
<path d="M201.00,602.00 L214.50,610.00 L206.00,615.00" stroke="#1a1a1a" stroke-width="0.8" fill="none" />
<text x="205.00" y="611.00" font-size="5.4" text-anchor="start" font-style="italic" fill="#555" transform="rotate(-80 205.00 611.00)" >2,5</text>
<path d="M197.50,636.00 L182.50,627.50 L191.50,622.50" stroke="#1a1a1a" stroke-width="0.8" fill="none" />
<text x="199.00" y="632.00" font-size="5.4" text-anchor="start" font-style="italic" fill="#555" transform="rotate(-80 199.00 632.00)" >2,5</text>
<rect x="150.6" y="-1" width="558.8" height="19.2" fill="#efefef" stroke="#7c7c7c" stroke-width="0.9"/>
<rect x="296" y="0" width="67" height="17.8" fill="#fbfbfb"/>
<rect x="408" y="0" width="59" height="17.8" fill="#fbfbfb"/>
<rect x="506.7" y="0" width="59.30000000000001" height="17.8" fill="#fbfbfb"/>
<rect x="577.7" y="0" width="36.799999999999955" height="17.8" fill="#fbfbfb"/>
<rect x="625.7" y="0" width="36.799999999999955" height="17.8" fill="#fbfbfb"/>
<rect x="163.2" y="0" width="38.6" height="18" fill="#4a4a4a"/>
<rect x="386" y="0" width="21" height="18" fill="#4a4a4a"/>
<line x1="203.50" y1="0.00" x2="203.50" y2="18.00" stroke="#8a8a8a" stroke-width="1" />
<line x1="272.40" y1="0.00" x2="272.40" y2="18.00" stroke="#555" stroke-width="1.4" />
<rect x="152.3" y="1.1" width="1.4" height="1.4" fill="#5a5a5a"/>
<rect x="152.3" y="3.4" width="1.4" height="1.4" fill="#5a5a5a"/>
<rect x="155.0" y="1.1" width="1.4" height="1.4" fill="#5a5a5a"/>
<rect x="155.0" y="3.4" width="1.4" height="1.4" fill="#5a5a5a"/>
<rect x="157.6" y="1.1" width="1.4" height="1.4" fill="#5a5a5a"/>
<rect x="157.6" y="3.4" width="1.4" height="1.4" fill="#5a5a5a"/>
<rect x="160.2" y="1.1" width="1.4" height="1.4" fill="#5a5a5a"/>
<rect x="160.2" y="3.4" width="1.4" height="1.4" fill="#5a5a5a"/>
<path d="M168.7,8.9 L175.8,3.3 Q178.4,1.7 180,3.4" stroke="#fff" stroke-width="2.8" fill="none" stroke-linecap="round" stroke-linejoin="round"/>
<path d="M180,3.4 Q181.9,5.8 179.9,8 L173.8,13.5" stroke="#d4d4d4" stroke-width="2.9" fill="none" stroke-linecap="round" stroke-linejoin="round"/>
<path d="M180.2,4.6 Q180.6,6.4 179.3,7.6 L173.8,12.8" stroke="#666" stroke-width="0.9" fill="none" stroke-dasharray="1.2 0.8"/>
<path d="M189.60,5.00 L198.20,5.00 L193.90,9.10 Z" stroke="#fff" stroke-width="0.2" fill="#fff" />
<line x1="209.00" y1="7.20" x2="215.70" y2="1.40" stroke="#666" stroke-width="1.1" />
<line x1="210.80" y1="9.00" x2="217.50" y2="3.20" stroke="#666" stroke-width="1.1" />
<line x1="214.80" y1="13.50" x2="222.00" y2="13.50" stroke="#3c3c3c" stroke-width="1.2" />
<line x1="218.40" y1="7.70" x2="218.40" y2="13.50" stroke="#3c3c3c" stroke-width="1.2" />
<line x1="231.50" y1="10.80" x2="238.20" y2="5.40" stroke="#666" stroke-width="1.1" />
<line x1="233.30" y1="12.20" x2="239.80" y2="7.00" stroke="#666" stroke-width="1.1" />
<line x1="236.90" y1="12.60" x2="241.90" y2="12.60" stroke="#3c3c3c" stroke-width="1.2" />
<line x1="239.50" y1="8.50" x2="239.50" y2="12.60" stroke="#3c3c3c" stroke-width="1.2" />
<path d="M235.2,4 Q240,-1.5999999999999996 244.8,4 Q240,8.6 235.2,4 Z" stroke="#3c3c3c" stroke-width="0.4" fill="#3c3c3c" />
<circle cx="240.00" cy="3.70" r="1.30" stroke="#ddd" stroke-width="0.7" fill="#777" />
<path d="M257.5,4 Q262.3,-1.5999999999999996 267.1,4 Q262.3,8.6 257.5,4 Z" stroke="#3c3c3c" stroke-width="0.4" fill="#3c3c3c" />
<circle cx="262.30" cy="3.70" r="1.30" stroke="#ddd" stroke-width="0.7" fill="#777" />
<path d="M256.60,8.10 L256.60,12.60 L260.50,12.60" stroke="#3c3c3c" stroke-width="1.2" fill="none" />
<path d="M262.60,12.60 L260.00,14.00 L260.00,11.20 Z" stroke="#3c3c3c" stroke-width="0.3" fill="#3c3c3c" />
<line x1="280.50" y1="1.80" x2="280.50" y2="14.00" stroke="#3c3c3c" stroke-width="1.4" />
<line x1="284.50" y1="1.80" x2="284.50" y2="14.00" stroke="#3c3c3c" stroke-width="1.4" />
<line x1="288.60" y1="1.80" x2="288.60" y2="14.00" stroke="#3c3c3c" stroke-width="1.4" />
<line x1="277.80" y1="3.60" x2="290.30" y2="3.60" stroke="#3c3c3c" stroke-width="1.4" />
<line x1="277.80" y1="7.60" x2="290.30" y2="7.60" stroke="#3c3c3c" stroke-width="1.4" />
<line x1="277.80" y1="11.70" x2="290.30" y2="11.70" stroke="#3c3c3c" stroke-width="1.4" />
<line x1="299.50" y1="2.00" x2="299.50" y2="10.50" stroke="#3c3c3c" stroke-width="1.1" />
<path d="M299.50,1.00 L300.90,4.00 L298.10,4.00 Z" stroke="#3c3c3c" stroke-width="0.3" fill="#3c3c3c" />
<circle cx="299.50" cy="12.00" r="1.60" stroke="#3c3c3c" stroke-width="1.0" fill="#fff" />
<line x1="301.00" y1="12.00" x2="308.50" y2="12.00" stroke="#3c3c3c" stroke-width="1.1" />
<path d="M310.50,12.00 L307.50,13.40 L307.50,10.60 Z" stroke="#3c3c3c" stroke-width="0.3" fill="#3c3c3c" />
<text x="312.60" y="12.00" font-size="10.3" text-anchor="start" fill="#444" textLength="20.5" lengthAdjust="spacingAndGlyphs" >СК 0</text>
<path d="M351.20,5.20 L357.80,5.20 L354.50,8.80 Z" stroke="#222" stroke-width="0.2" fill="#222" />
<path d="M368.30,13.20 L374.00,13.20 L374.00,2.00 L380.00,2.00" stroke="#3c3c3c" stroke-width="1.3" fill="none" />
<line x1="392.00" y1="11.00" x2="402.50" y2="4.50" stroke="#fff" stroke-width="1.2" />
<circle cx="392.00" cy="11.00" r="1.50" stroke="#fff" stroke-width="1" fill="#4a4a4a" />
<circle cx="402.80" cy="4.30" r="1.50" stroke="#fff" stroke-width="1" fill="#4a4a4a" />
<path d="M391.70,4.80 L393.50,3.00 L395.30,4.80 L393.50,6.60 Z" stroke="#fff" stroke-width="0.9" fill="none" />
<path d="M399.70,11.30 L401.50,9.50 L403.30,11.30 L401.50,13.10 Z" stroke="#fff" stroke-width="0.9" fill="none" />
<line x1="412.50" y1="3.50" x2="412.50" y2="13.80" stroke="#3c3c3c" stroke-width="1.1" />
<line x1="421.50" y1="3.50" x2="421.50" y2="13.80" stroke="#3c3c3c" stroke-width="1.1" />
<line x1="412.50" y1="11.50" x2="419.00" y2="11.50" stroke="#3c3c3c" stroke-width="1.0" />
<path d="M421.30,11.80 L418.30,13.10 L418.30,10.50 Z" stroke="#3c3c3c" stroke-width="0.3" fill="#3c3c3c" />
<path d="M410.90,2.30 L412.50,0.70 L414.10,2.30 L412.50,3.90 Z" stroke="#3c3c3c" stroke-width="0.8" fill="none" />
<path d="M419.90,2.30 L421.50,0.70 L423.10,2.30 L421.50,3.90 Z" stroke="#3c3c3c" stroke-width="0.8" fill="none" />
<text x="428.30" y="12.00" font-size="10.3" text-anchor="start" fill="#444" >1</text>
<path d="M455.20,5.20 L461.80,5.20 L458.50,8.80 Z" stroke="#222" stroke-width="0.2" fill="#222" />
<circle cx="476.80" cy="6.00" r="4.30" stroke="#3c3c3c" stroke-width="1.1" fill="none" />
<line x1="480.00" y1="9.30" x2="483.30" y2="12.80" stroke="#3c3c3c" stroke-width="1.8" />
<rect x="479.5" y="2" width="4" height="5" fill="none" stroke="#888" stroke-width="0.7" stroke-dasharray="1 1"/>
<path d="M494.80,5.20 L501.40,5.20 L498.10,8.80 Z" stroke="#222" stroke-width="0.2" fill="#222" />
<circle cx="513.50" cy="6.00" r="4.30" stroke="#3c3c3c" stroke-width="1.1" fill="none" />
<line x1="516.70" y1="9.30" x2="520.00" y2="12.80" stroke="#3c3c3c" stroke-width="1.8" />
<line x1="511.30" y1="6.50" x2="515.70" y2="6.50" stroke="#3c3c3c" stroke-width="1.0" />
<line x1="513.50" y1="3.80" x2="513.50" y2="8.20" stroke="#3c3c3c" stroke-width="1.0" />
<clipPath id="zc"><rect x="520" y="0" width="27.3" height="18"/></clipPath>
<text x="526.70" y="12.00" font-size="10.3" text-anchor="start" fill="#444" textLength="23.2" lengthAdjust="spacingAndGlyphs" clip-path="url(#zc)">0.536</text>
<path d="M554.20,5.20 L560.80,5.20 L557.50,8.80 Z" stroke="#222" stroke-width="0.2" fill="#222" />
<text x="569.20" y="12.00" font-size="10.3" text-anchor="start" fill="#444" textLength="5.8" lengthAdjust="spacingAndGlyphs" >X</text>
<clipPath id="xc"><rect x="577.7" y="0" width="36.3" height="18"/></clipPath>
<text x="580.00" y="12.00" font-size="10.3" text-anchor="start" fill="#444" textLength="37.6" lengthAdjust="spacingAndGlyphs" clip-path="url(#xc)">35.20143</text>
<text x="617.30" y="12.00" font-size="10.3" text-anchor="start" fill="#444" textLength="5.6" lengthAdjust="spacingAndGlyphs" >Y</text>
<clipPath id="yc"><rect x="625.7" y="0" width="36.3" height="18"/></clipPath>
<text x="628.00" y="12.00" font-size="10.3" text-anchor="start" fill="#444" textLength="37.6" lengthAdjust="spacingAndGlyphs" clip-path="url(#yc)">383.3189</text>
<line x1="668.00" y1="2.20" x2="681.00" y2="2.20" stroke="#444" stroke-width="1.5" />
<line x1="670.50" y1="3.00" x2="670.50" y2="10.00" stroke="#5c5c5c" stroke-width="0.9" stroke-dasharray="1.5 1"/>
<rect x="668" y="10.5" width="5.4" height="3.4" fill="#5c5c5c"/>
<rect x="675.8" y="3.2" width="4" height="10.7" fill="#5c5c5c"/>
<line x1="676.60" y1="5.50" x2="679.00" y2="5.50" stroke="#e8e8e8" stroke-width="0.8" />
<line x1="676.60" y1="7.50" x2="679.00" y2="7.50" stroke="#e8e8e8" stroke-width="0.8" />
<line x1="676.60" y1="10.50" x2="679.00" y2="10.50" stroke="#e8e8e8" stroke-width="0.8" />
<line x1="676.60" y1="12.50" x2="679.00" y2="12.50" stroke="#e8e8e8" stroke-width="0.8" />
<path d="M691.5,13.8 L692.3,11 L698,5.2 L700,7.2 L694.3,13 Z" stroke="#3c3c3c" stroke-width="0.9" fill="none" />
<path d="M697.3,4 L701.3,8 M698.7,5.3 L701.2,2.5 Q702.7,1.3 703.5,2.7 Q704,3.7 702.8,4.8 L700.2,7" stroke="#3c3c3c" stroke-width="2.0" fill="none" stroke-linecap="round"/>
</svg>
</body></html>
